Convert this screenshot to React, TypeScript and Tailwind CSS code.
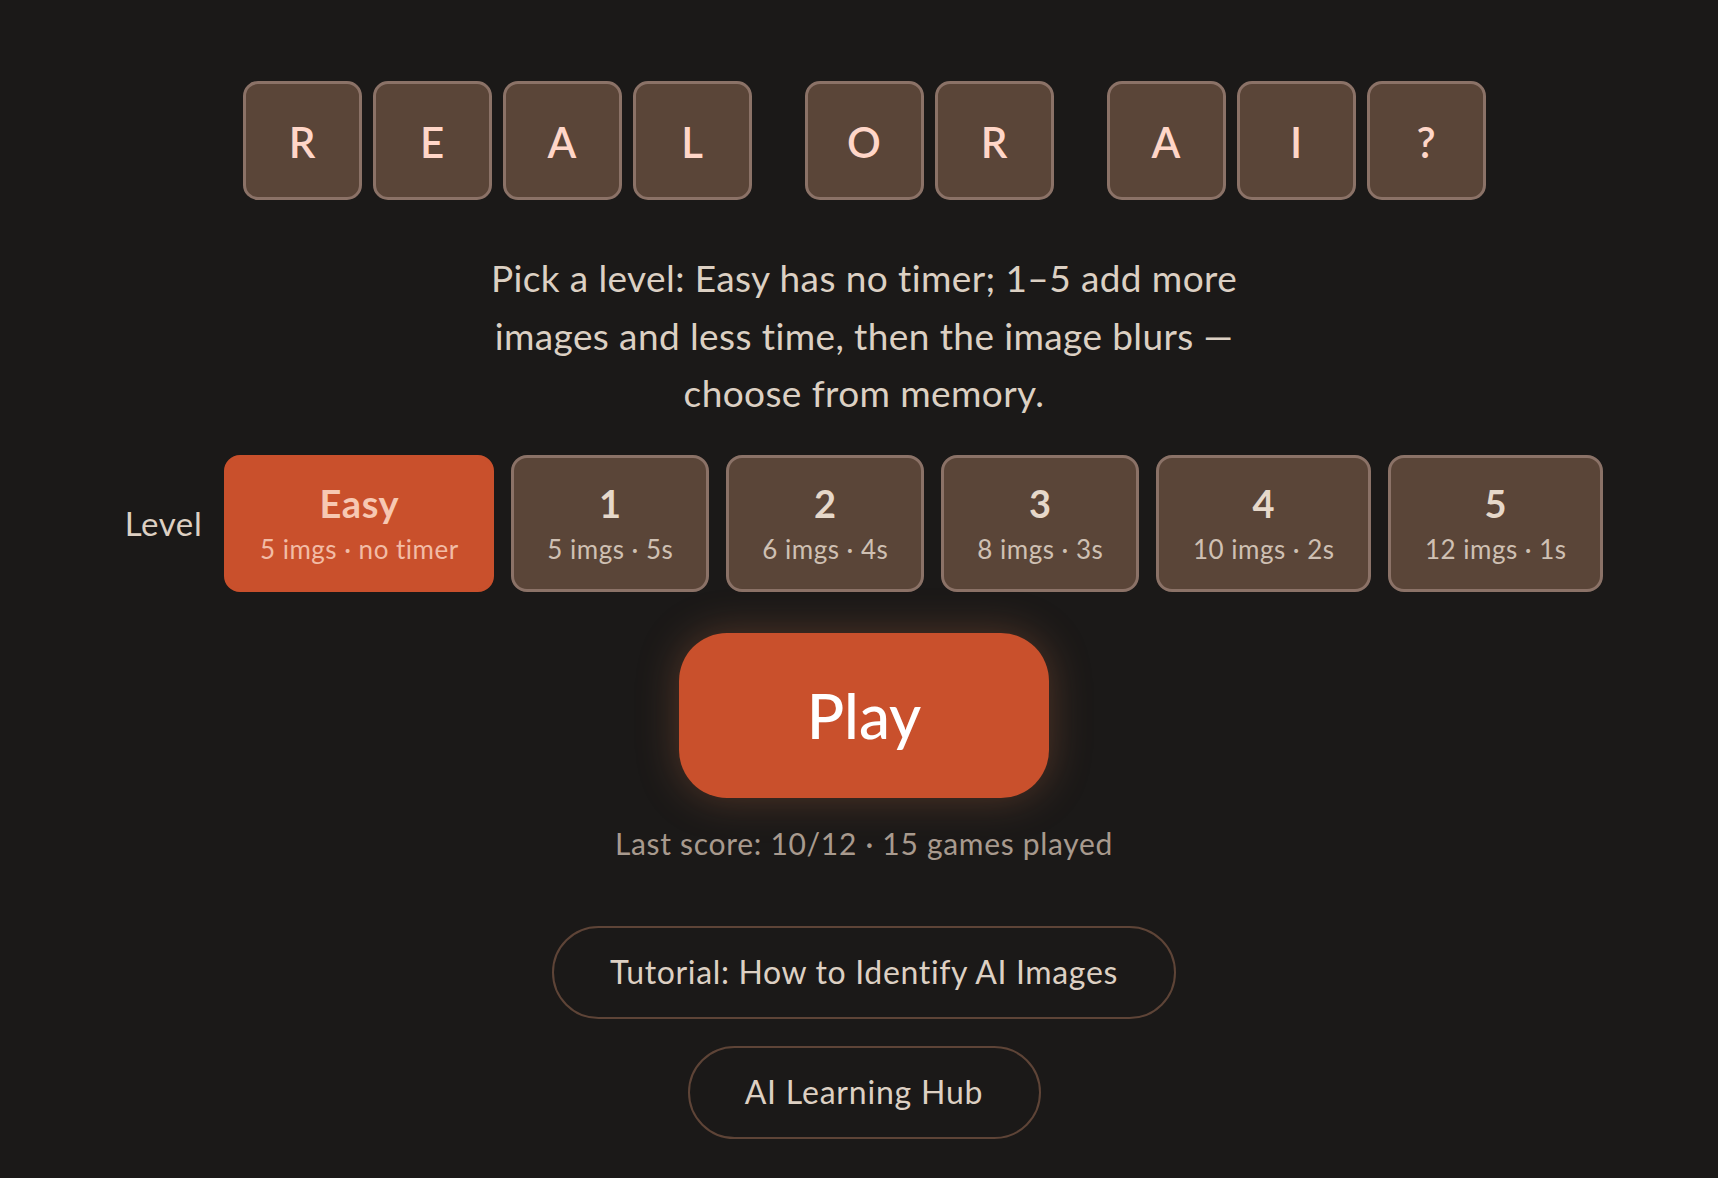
import React from "react";

const words = [["R", "E", "A", "L"], ["O", "R"], ["A", "I", "?"]];

const levels = [
  { title: "Easy", sub: "5 imgs · no timer", w: "w-[270px]", active: true },
  { title: "1", sub: "5 imgs · 5s", w: "w-[198px]" },
  { title: "2", sub: "6 imgs · 4s", w: "w-[198px]" },
  { title: "3", sub: "8 imgs · 3s", w: "w-[198px]" },
  { title: "4", sub: "10 imgs · 2s", w: "w-[215px]" },
  { title: "5", sub: "12 imgs · 1s", w: "w-[215px]" },
];

export default function App() {
  return (
    <div
      className="min-h-[1178px] w-full bg-[#1b1918] pl-[10px] flex flex-col items-center"
      style={{ fontFamily: "Lato, 'Open Sans', sans-serif" }}
    >
      {/* title tiles */}
      <div className="mt-[81px] flex gap-[53px]">
        {words.map((w, i) => (
          <div key={i} className="flex gap-[11px]">
            {w.map((ch, j) => (
              <div
                key={j}
                className="w-[119px] h-[119px] rounded-[15px] border-[3px] border-[#8b7267] bg-[#5a4538] flex items-center justify-center pt-[3px] text-[42px] font-semibold text-[#ffd6c8]"
              >
                {ch}
              </div>
            ))}
          </div>
        ))}
      </div>

      <p className="mt-[49px] max-w-[770px] text-center text-[37px] tracking-[0.4px] leading-[57.6px] text-[#dcd0c3]">
        Pick a level: Easy has no timer; 1–5 add more images and less time, then the image blurs — choose from memory.
      </p>

      {/* level picker */}
      <div className="mt-[33px] flex items-center">
        <span className="mr-[22px] text-[33px] tracking-[0.6px] text-[#ddd0c3]">Level</span>
        <div className="flex gap-[17px]">
          {levels.map((l) => (
            <button
              key={l.title}
              className={
                "h-[137px] rounded-[16px] flex flex-col items-center pt-[19px] " +
                l.w +
                (l.active
                  ? " bg-[#c9502c] border-[3px] border-[#c9502c]"
                  : " bg-[#5a4538] border-[3px] border-[#8b7267]")
              }
            >
              <span
                className={
                  "text-[38px] tracking-[0.5px] font-bold leading-[52px] " +
                  (l.active ? "text-[#f7c8b3]" : "text-[#e6d8ca]")
                }
              >
                {l.title}
              </span>
              <span
                className={
                  "mt-[2px] text-[26px] tracking-[0.5px] leading-[36px] " +
                  (l.active ? "text-[#f2bca6]" : "text-[#cfc0b3]")
                }
              >
                {l.sub}
              </span>
            </button>
          ))}
        </div>
      </div>

      <button className="mt-[41px] w-[370px] h-[165px] rounded-[48px] bg-[#c9502c] text-white text-[62px] font-medium shadow-[0_0_40px_rgba(190,110,70,0.35)]">
        Play
      </button>

      <p className="mt-[25px] text-[30px] tracking-[0.7px] leading-[40px] text-[#a89a8e]">
        Last score: 10/12 · 15 games played
      </p>

      <button className="mt-[63px] w-[624px] h-[93px] rounded-full border-2 border-[#5e4437] text-[32px] tracking-[0.65px] text-[#ddd0c3]">
        Tutorial: How to Identify AI Images
      </button>
      <button className="mt-[27px] w-[353px] h-[93px] rounded-full border-2 border-[#5e4437] text-[32px] tracking-[0.8px] text-[#ddd0c3]">
        AI Learning Hub
      </button>
    </div>
  );
}
